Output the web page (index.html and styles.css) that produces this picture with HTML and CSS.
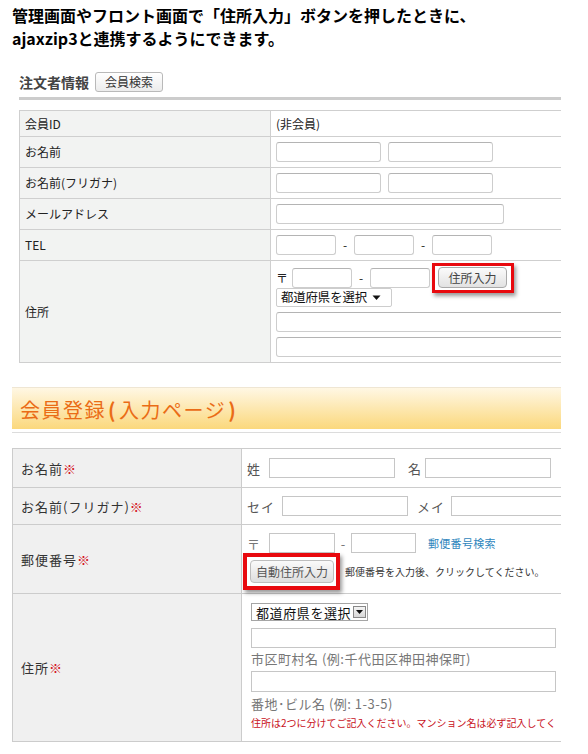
FILE: index.html
```html
<!DOCTYPE html>
<html lang="ja">
<head>
<meta charset="utf-8">
<title>ajaxzip3</title>
<link rel="stylesheet" href="styles.css">
</head>
<body>
<div class="page">
  <h1 class="lead">管理画面やフロント画面で「住所入力」ボタンを押したときに、<br>ajaxzip3と連携するようにできます。</h1>

  <div class="order-head">
    <span class="order-title">注文者情報</span>
    <button class="btn-search">会員検索</button>
  </div>
  <div class="bar"></div>

  <div class="t1">
    <div class="row h25"><div class="lab">会員ID</div><div class="val">(非会員)</div></div>
    <div class="row h30"><div class="lab">お名前</div><div class="val"><span class="in w105"></span><span class="in w105 ml7"></span></div></div>
    <div class="row h30"><div class="lab">お名前(フリガナ)</div><div class="val"><span class="in w105"></span><span class="in w105 ml7"></span></div></div>
    <div class="row h30"><div class="lab">メールアドレス</div><div class="val"><span class="in w228"></span></div></div>
    <div class="row h30"><div class="lab">TEL</div><div class="val"><span class="in w60"></span><span class="dash">-</span><span class="in w60"></span><span class="dash">-</span><span class="in w60"></span></div></div>
    <div class="row h101">
      <div class="lab">住所</div>
      <div class="val addr">
        <div class="zipline">
          <span class="zip">〒</span><span class="in w60"></span><span class="dash">-</span><span class="in w60"></span>
          <span class="hl hl1"><button class="btn-addr">住所入力</button></span>
        </div>
        <span class="sel1">都道府県を選択<svg class="arr1" width="9" height="6" viewBox="0 0 9 6"><path d="M0.5 0.5h8L4.5 5z" fill="#111"/></svg></span>
        <span class="in wide mt5"></span>
        <span class="in wide mt5"></span>
      </div>
    </div>
  </div>

  <div class="sec-head">
    <h2 class="sec-title">会員登録<span class="paren">(</span>入力ページ<span class="paren">)</span></h2>
  </div>

  <div class="t2">
    <div class="row2 r38">
      <div class="lab2">お名前<span class="req">※</span></div>
      <div class="val2"><span class="pre">姓</span><span class="in2 w126 ml8"></span><span class="pre ml13">名</span><span class="in2 w126 ml3"></span></div>
    </div>
    <div class="row2 r36">
      <div class="lab2">お名前(フリガナ)<span class="req">※</span></div>
      <div class="val2"><span class="pre">セイ</span><span class="in2 w126 ml7"></span><span class="pre ml9">メイ</span><span class="in2 w126 ml6"></span></div>
    </div>
    <div class="row2 r68">
      <div class="lab2">郵便番号<span class="req">※</span></div>
      <div class="val2 zipcell">
        <div class="zipline2">
          <span class="pre grey">〒</span><span class="in2 w66 ml8"></span><span class="dash2">-</span><span class="in2 w65"></span><a class="ziplink" href="#">郵便番号検索</a>
        </div>
        <div class="btnline">
          <span class="hl hl2"><button class="btn-auto">自動住所入力</button></span><span class="hint">郵便番号を入力後、クリックしてください。</span>
        </div>
      </div>
    </div>
    <div class="row2 r147">
      <div class="lab2">住所<span class="req">※</span></div>
      <div class="val2 addr2">
        <span class="sel2">都道府県を選択<span class="ddbtn"><svg width="7" height="4" viewBox="0 0 7 4"><path d="M0 0h7L3.5 4z" fill="#111"/></svg></span></span>
        <span class="in2 w305 mt7"></span>
        <span class="note">市区町村名 (例:千代田区神田神保町)</span>
        <span class="in2 w305 h21 mt3"></span>
        <span class="note n2">番地･ビル名 (例: 1-3-5)</span>
        <span class="warn">住所は2つに分けてご記入ください。マンション名は必ず記入してく</span>
      </div>
    </div>
  </div>
</div>
</body>
</html>
```

FILE: styles.css
```css
* { box-sizing: border-box; }
html, body { margin: 0; padding: 0; background: #fff; }
body { font-family: "Noto Sans CJK JP", "Noto Sans", sans-serif; color: #222; }

.page { width: 561px; overflow: hidden; padding-bottom: 20px; }

.lead {
  margin: 0;
  padding: 4px 0 0 12px;
  font-size: 16px;
  letter-spacing: 0;
  line-height: 23px;
  font-weight: bold;
  color: #000;
  white-space: nowrap;
}

.order-head {
  display: flex;
  align-items: center;
  height: 20px;
  margin: 22px 0 0 19px;
}
.order-title { font-size: 14px; font-weight: bold; color: #444; line-height: 1; }
.btn-search {
  margin-left: 6px;
  width: 68px;
  height: 20px;
  padding: 0;
  font-family: inherit;
  font-size: 12px;
  color: #333;
  border: 1px solid #b9b9b9;
  border-radius: 3px;
  background: linear-gradient(#ffffff, #ececec);
  line-height: 1;
}

.bar { height: 3px; background: #cccccc; margin: 5px 0 0 19px; }

/* highlight frame drawn over the buttons */
.hl { position: relative; display: inline-flex; flex: none; }
.hl::after {
  content: "";
  position: absolute;
  border: 3px solid #e8090e;
  box-shadow: 2px 3px 4px rgba(0,0,0,0.4);
  pointer-events: none;
}
.hl1::after { top: -4px; bottom: -5px; left: -6px; right: -7px; }
.hl2::after { top: -7px; bottom: -7px; left: -7px; right: -6px; border-width: 4px; }

/* ---------- table 1 ---------- */
.t1 {
  width: 620px;
  margin: 10px 0 0 19px;
  border-top: 1px solid #cfcfcf;
  border-left: 1px solid #cfcfcf;
  font-size: 12px;
  color: #222;
}
.row {
  display: grid;
  grid-template-columns: 251px 1fr;
  border-bottom: 1px solid #cfcfcf;
}
.h25 { height: 26px; }
.h30 { height: 31px; }
.h101 { height: 102px; }
.lab {
  background: #f2f3f2;
  border-right: 1px solid #cfcfcf;
  display: flex;
  align-items: center;
  padding-left: 5px;
  line-height: 1;
}
.val {
  display: flex;
  align-items: center;
  padding-left: 5px;
  line-height: 1;
}
.in {
  display: inline-block;
  height: 20px;
  border: 1px solid #cdcdcd;
  border-top-color: #b4b4b4;
  border-radius: 3px;
  background: #fff;
  flex: none;
}
.w105 { width: 105px; }
.w228 { width: 228px; }
.w60 { width: 60px; }
.ml7 { margin-left: 7px; }
.wide { width: 400px; }
.mt5 { margin-top: 5px; }
.dash { width: 18px; text-align: center; font-size: 12px; color: #222; }

.addr {
  flex-direction: column;
  align-items: flex-start;
  justify-content: flex-start;
  padding-top: 6px;
}
.zipline { display: flex; align-items: center; height: 21px; }
.zip { width: 16px; font-size: 12px; }
.hl1 { margin-left: 8px; }
.btn-addr {
  width: 69px;
  height: 21px;
  padding: 0;
  font-family: inherit;
  font-size: 12px;
  color: #444;
  border: 1px solid #a9a9a9;
  border-radius: 4px;
  background: linear-gradient(#fbfbfb, #e2e2e2);
  line-height: 1;
}
.sel1 {
  display: inline-flex;
  align-items: center;
  width: 116px;
  height: 19px;
  padding-left: 4px;
  border: 1px solid #cdcdcd;
  border-radius: 2px;
  font-size: 12.4px;
  letter-spacing: -0.1px;
  color: #111;
  line-height: 1;
}
.arr1 { margin-left: auto; margin-right: 10px; }

/* ---------- section header ---------- */
.sec-head {
  margin: 24px 0 0 12px;
  border-top: 1px solid #efe6d3;
  padding-bottom: 3px;
  border-bottom: 1px solid #dcdcdc;
}
.sec-title {
  margin: 0;
  height: 41px;
  padding: 3px 0 0 8px;
  display: flex;
  align-items: center;
  background: linear-gradient(#fff7e4, #fbd87c);
  font-size: 20px;
  font-weight: normal;
  letter-spacing: 1.5px;
  color: #ea6c16;
  line-height: 1;
}
.paren { font-weight: bold; padding: 0 2px; }

/* ---------- table 2 ---------- */
.t2 {
  width: 600px;
  margin: 15px 0 0 12px;
  border-top: 1px solid #cccccc;
  border-left: 1px solid #cccccc;
  font-size: 13px;
  color: #333;
}
.row2 {
  display: grid;
  grid-template-columns: 229px 1fr;
  border-bottom: 1px solid #cccccc;
}
.r38 { height: 39px; }
.r36 { height: 37px; }
.r68 { height: 69px; }
.r147 { height: 148px; }
.lab2 {
  background: #f0f0f0;
  border-right: 1px solid #cccccc;
  display: flex;
  align-items: center;
  padding-left: 8px;
  letter-spacing: 1px;
  line-height: 1;
}
.req { color: #d4101a; }
.val2 {
  display: flex;
  align-items: center;
  padding-left: 5px;
  line-height: 1;
}
.pre { color: #555; letter-spacing: 1px; }
.grey { color: #777; }
.in2 {
  display: inline-block;
  height: 20px;
  border: 1px solid #c6c6c6;
  background: #fff;
  flex: none;
}
.w126 { width: 126px; }
.w66 { width: 66px; }
.w65 { width: 65px; }
.w305 { width: 305px; }
.h21 { height: 21px; }
.ml3 { margin-left: 3px; }
.ml6 { margin-left: 6px; }
.ml8 { margin-left: 8px; }
.ml9 { margin-left: 9px; }
.ml13 { margin-left: 13px; }
.mt3 { margin-top: 3px; }
.mt7 { margin-top: 7px; }
.dash2 { width: 16px; text-align: center; color: #777; }

.zipcell {
  flex-direction: column;
  align-items: flex-start;
  justify-content: flex-start;
  padding-top: 8px;
}
.zipline2 { display: flex; align-items: center; height: 20px; }
.ziplink {
  margin-left: 12px;
  font-size: 11px;
  letter-spacing: 0.3px;
  color: #2f86bd;
  text-decoration: none;
}
.btnline { display: flex; align-items: center; margin-top: 7px; }
.hl2 { margin-left: 3px; }
.btn-auto {
  width: 84px;
  height: 23px;
  padding: 0;
  font-family: inherit;
  font-size: 12px;
  color: #555;
  border: 1px solid #bdbdbd;
  border-radius: 4px;
  background: linear-gradient(#fafafa, #dedede);
  line-height: 1;
}
.hint { margin-left: 11px; font-size: 10px; color: #333; letter-spacing: 0; }

.addr2 {
  flex-direction: column;
  align-items: flex-start;
  justify-content: flex-start;
  padding: 9px 0 0 9px;
}
.sel2 {
  display: inline-flex;
  align-items: center;
  width: 117px;
  height: 18px;
  padding-left: 4px;
  border: 1px solid #a5a5a5;
  font-size: 13px;
  letter-spacing: 0.6px;
  color: #111;
}
.ddbtn {
  margin-left: auto;
  margin-right: 1px;
  width: 13px;
  height: 12px;
  border: 1px solid #888;
  background: linear-gradient(#f4f4f4, #d8d8d8);
  display: flex;
  align-items: center;
  justify-content: center;
}
.note {
  height: 20px;
  display: flex;
  align-items: center;
  font-size: 13px;
  color: #777;
  letter-spacing: 0.5px;
  white-space: nowrap;
}
.n2 { height: 22px; }
.warn {
  height: 18px;
  display: flex;
  align-items: center;
  font-size: 10px;
  color: #c8101a;
  white-space: nowrap;
}
```
